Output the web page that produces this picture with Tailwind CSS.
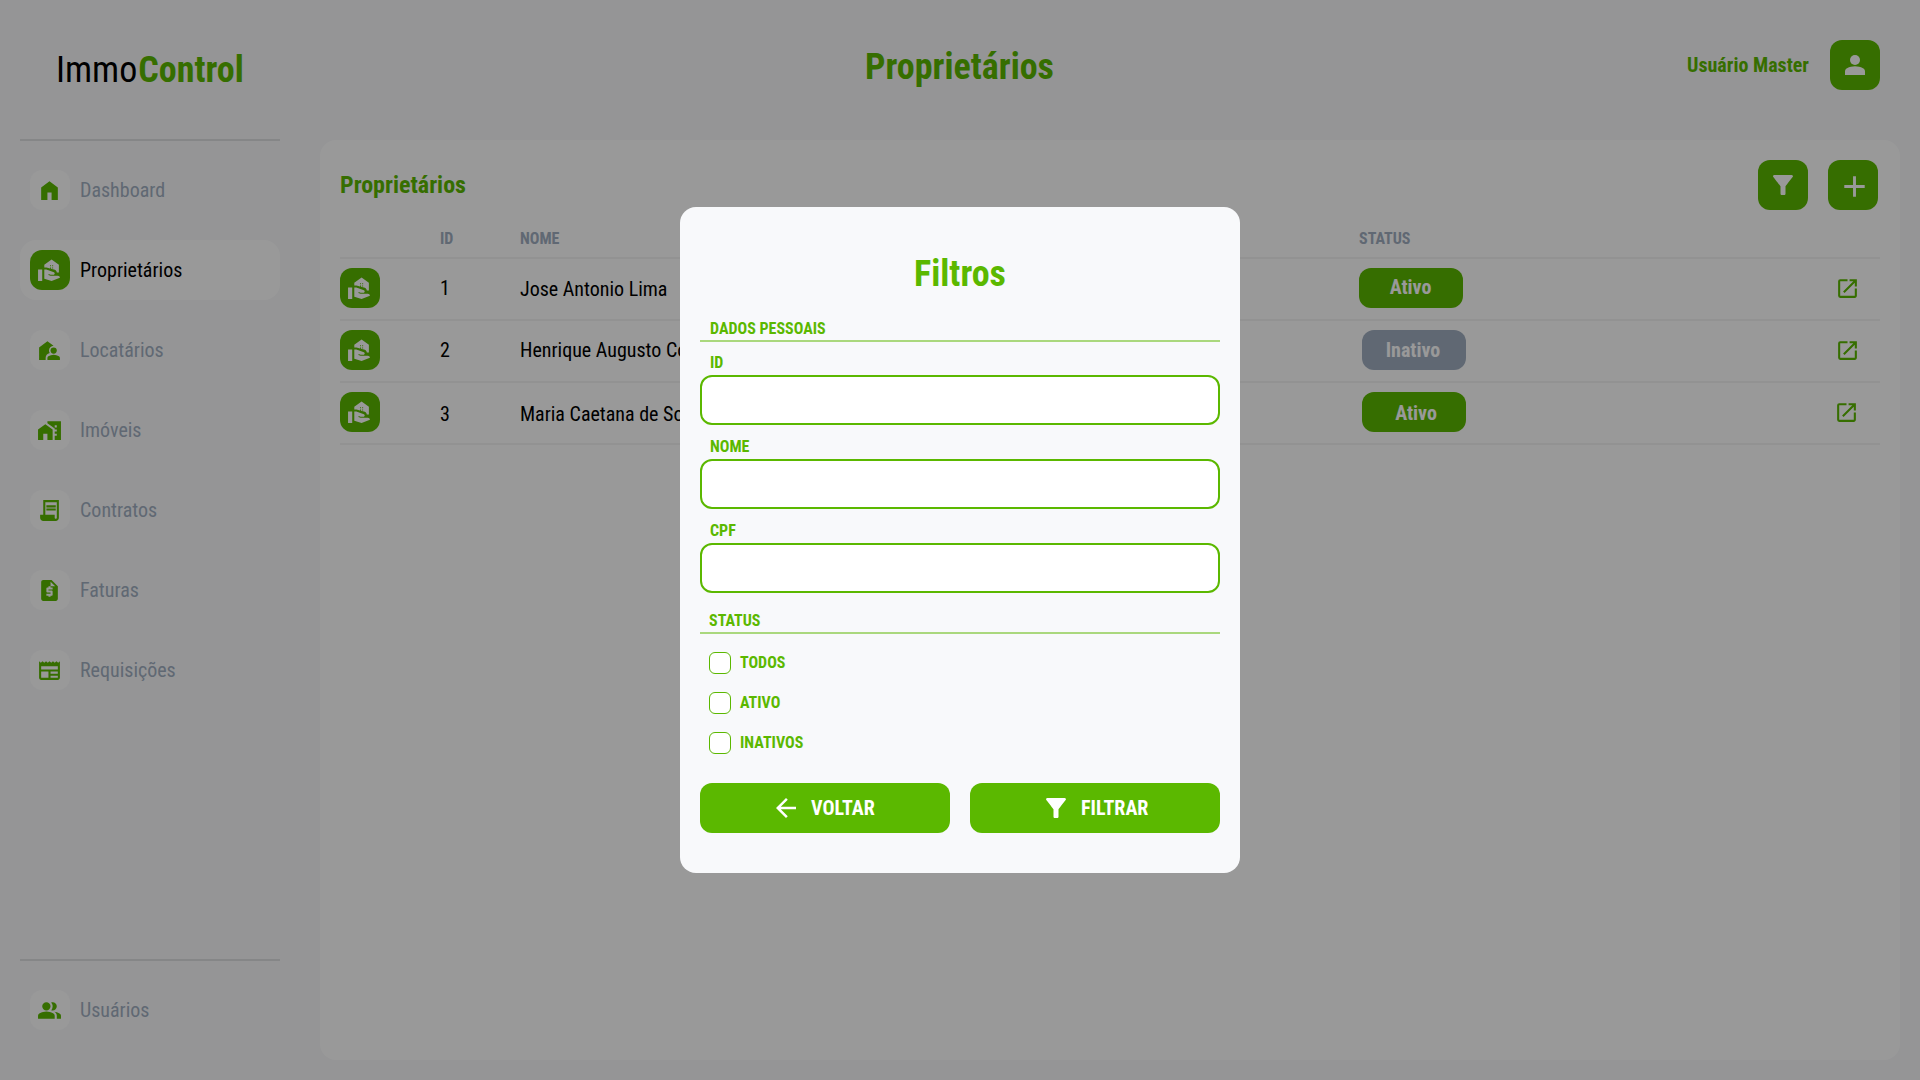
<!DOCTYPE html>
<html lang="pt-BR">
<head>
<meta charset="utf-8">
<title>ImmoControl - Proprietários</title>
<script src="https://cdn.jsdelivr.net/npm/@tailwindcss/browser@4"></script>
</head>
<body class="h-[1080px] w-[1920px] overflow-hidden bg-[#f8f9fb] font-['Roboto_Condensed','Roboto',sans-serif] text-xl text-black [font-stretch:75%]">
<svg class="hidden">
  <symbol id="home" viewBox="0 0 24 24"><path d="M4 21V9l8-6 8 6v12h-6v-7h-4v7z"/></symbol>
  <symbol id="agent" viewBox="0 0 24 24"><path d="M1 11h4v11H1zM20 17h-7l-2.09-.73.33-.94L13 16h2.82c.65 0 1.18-.53 1.18-1.18 0-.49-.31-.93-.77-1.11L8.97 11H7v9.02L14 22l8.01-3C22 17.9 21.11 17 20 17z"/><path fill-rule="evenodd" d="M14 1.5l-7 5V9h2l8.14 2.26c1.15.51 1.86 1.66 1.86 2.74h2V6.5l-7-5zM13.5 10h-1V9h1v1zm0-2h-1V7h1v1zm2 2h-1V9h1v1zm0-2h-1V7h1v1z"/></symbol>
  <symbol id="tenant" viewBox="0 0 24 24"><path d="M2 21V9l8-6 5.900 4.400A4.500 4.500 0 0 0 11.500 12q0 1.400.8 2.500Q8.300 15.800 8.300 19v2z"/><circle cx="16" cy="12" r="3"/><path d="M10 21v-1.900q0-1 .9-1.500Q13.300 16 16 16t5.100 1.600q.9.5.9 1.500V21z"/></symbol>
  <symbol id="building" viewBox="0 0 24 24"><path d="M1 11v10h5v-6h4v6h5V11L8 6z"/><path d="M10 3v1.970l7 5V11h2v2h-2v2h2v2h-2v4h6V3H10zm9 6h-2V7h2v2z"/></symbol>
  <symbol id="contract" viewBox="0 0 24 24"><path d="M6 22q-1.250 0-2.125-.875T3 19v-3h3V2h15v17q0 1.250-.875 2.125T18 22zm12-2q.425 0 .713-.288T19 19V4H8v12h9v3q0 .425.288.713T18 20M9 9V7h9v2zm0 3v-2h9v2z"/></symbol>
  <symbol id="quote" viewBox="0 0 24 24"><path d="M14 2H6c-1.100 0-1.990.9-1.990 2L4 20c0 1.100.89 2 1.990 2H18c1.100 0 2-.9 2-2V8l-6-6zm1 9h-4v1h3c.55 0 1 .45 1 1v3c0 .55-.45 1-1 1h-1v1h-2v-1H9v-2h4v-1h-3c-.55 0-1-.45-1-1v-3c0-.55.45-1 1-1h1V8h2v1h2v2zm-2-3V3.500L17.500 8H13z"/></symbol>
  <symbol id="news" viewBox="0 0 24 24"><path d="M22 3l-1.670 1.670L18.670 3 17 4.670 15.330 3l-1.660 1.670L12 3l-1.670 1.670L8.670 3 7 4.670 5.330 3 3.670 4.670 2 3v16c0 1.100.9 2 2 2h16c1.100 0 2-.9 2-2V3zM11 19H4v-6h7v6zm9 0h-7v-2h7v2zm0-4h-7v-2h7v2zm0-4H4V8h16v3z"/></symbol>
  <symbol id="group" viewBox="0 0 24 24"><path d="M1 20v-2.800q0-.85.438-1.562T2.600 14.550q1.550-.775 3.150-1.162T9 13t3.250.388 3.150 1.162q.725.375 1.163 1.088T17 17.200V20zm18 0v-3q0-1.100-.612-2.113T16.650 13.150q1.275.15 2.400.513t2.100.887q.9.5 1.375 1.112T23 17v3zM9 12q-1.650 0-2.825-1.175T5 8t1.175-2.825T9 4t2.825 1.175T13 8t-1.175 2.825T9 12m10-4q0 1.650-1.175 2.825T15 12q-.275 0-.7-.062t-.7-.138q.675-.8 1.038-1.775T15 8t-.362-2.025T13.600 4.200q.35-.125.7-.163T15 4q1.650 0 2.825 1.175T19 8"/></symbol>
  <symbol id="person" viewBox="0 0 24 24"><circle cx="12" cy="8" r="4"/><path d="M4 20v-2.800q0-.85.438-1.562T5.600 14.550q1.550-.775 3.150-1.162T12 13t3.250.388 3.150 1.162q.725.375 1.163 1.088T20 17.200V20z"/></symbol>
  <symbol id="filter" viewBox="0 0 24 24"><path d="M4.250 5.610C6.270 8.200 10 13 10 13v6c0 .55.45 1 1 1h2c.55 0 1-.45 1-1v-6s3.720-4.800 5.740-7.390A.998.998 0 0 0 18.950 4H5.040c-.83 0-1.300.95-.79 1.610z"/></symbol>
  <symbol id="plus" viewBox="0 0 24 24"><path d="M19 13h-6v6h-2v-6H5v-2h6V5h2v6h6z"/></symbol>
  <symbol id="back" viewBox="0 0 24 24"><path d="M20 11H7.830l5.590-5.590L12 4l-8 8 8 8 1.410-1.410L7.830 13H20z"/></symbol>
  <symbol id="open" viewBox="0 0 24 24"><path d="M19 19H5V5h7V3H5a2 2 0 0 0-2 2v14a2 2 0 0 0 2 2h14c1.100 0 2-.9 2-2v-7h-2v7zM14 3v2h3.590l-9.830 9.830 1.410 1.410L19 6.410V10h2V3h-7z"/></symbol>
</svg>

<div class="flex h-full flex-col">
  <header class="grid h-[140px] shrink-0 grid-cols-3">
    <div class="pt-[47px] pl-[56px] text-4xl leading-[46px]">Immo<span class="ml-px font-bold text-[#5bb800]">Control</span></div>
    <h1 class="pt-11 pr-px text-center text-4xl leading-[46px] font-bold text-[#5bb800]">Proprietários</h1>
    <div class="flex items-start justify-end gap-[21px] pt-10 pr-10">
      <span class="leading-[50px] font-bold text-[#5bb800]">Usuário Master</span>
      <button class="flex size-[50px] items-center justify-center rounded-xl bg-[#5bb800] text-white"><svg class="size-[30px] fill-current"><use href="#person"/></svg></button>
    </div>
  </header>

  <div class="flex min-h-0 flex-1">
    <aside class="flex w-[320px] shrink-0 flex-col pr-10 pb-10 pl-5">
      <hr class="-mt-px h-[2px] border-0 bg-[#dedfe1]">
      <nav class="mt-[19px] flex flex-col gap-5 text-[#a0aec0]">
        <a class="flex h-[60px] items-center gap-2.5 rounded-2xl px-2.5"><span class="flex size-10 items-center rounded-xl bg-white pl-[7px] text-[#5bb800]"><svg class="size-[25px] fill-current"><use href="#home"/></svg></span>Dashboard</a>
        <a class="flex h-[60px] items-center gap-2.5 rounded-2xl bg-white px-2.5 text-black"><span class="flex size-10 items-center rounded-xl bg-[#5bb800] pl-[7px] text-white"><svg class="size-[25px] fill-current"><use href="#agent"/></svg></span>Proprietários</a>
        <a class="flex h-[60px] items-center gap-2.5 rounded-2xl px-2.5"><span class="flex size-10 items-center rounded-xl bg-white pl-[7px] text-[#5bb800]"><svg class="size-[25px] fill-current"><use href="#tenant"/></svg></span>Locatários</a>
        <a class="flex h-[60px] items-center gap-2.5 rounded-2xl px-2.5"><span class="flex size-10 items-center rounded-xl bg-white pl-[7px] text-[#5bb800]"><svg class="size-[25px] fill-current"><use href="#building"/></svg></span>Imóveis</a>
        <a class="flex h-[60px] items-center gap-2.5 rounded-2xl px-2.5"><span class="flex size-10 items-center rounded-xl bg-white pl-[7px] text-[#5bb800]"><svg class="size-[25px] fill-current"><use href="#contract"/></svg></span>Contratos</a>
        <a class="flex h-[60px] items-center gap-2.5 rounded-2xl px-2.5"><span class="flex size-10 items-center rounded-xl bg-white pl-[7px] text-[#5bb800]"><svg class="size-[25px] fill-current"><use href="#quote"/></svg></span>Faturas</a>
        <a class="flex h-[60px] items-center gap-2.5 rounded-2xl px-2.5"><span class="flex size-10 items-center rounded-xl bg-white pl-[7px] text-[#5bb800]"><svg class="size-[25px] fill-current"><use href="#news"/></svg></span>Requisições</a>
      </nav>
      <hr class="mt-auto h-[2px] border-0 bg-[#dedfe1]">
      <a class="mt-[19px] flex h-[60px] items-center gap-2.5 px-2.5 text-[#a0aec0]"><span class="flex size-10 items-center rounded-xl bg-white pl-[7px] text-[#5bb800]"><svg class="size-[25px] fill-current"><use href="#group"/></svg></span>Usuários</a>
    </aside>

    <main class="mr-5 mb-5 flex-1 rounded-2xl bg-white px-5 pt-5">
      <div class="flex h-[50px] justify-between pr-0.5">
        <h2 class="text-2xl leading-[51px] font-bold text-[#5bb800]">Proprietários</h2>
        <div class="flex gap-5">
          <button class="flex size-[50px] items-center justify-center rounded-xl bg-[#5bb800] text-white"><svg class="size-[30px] fill-current"><use href="#filter"/></svg></button>
          <button class="flex size-[50px] items-center justify-center rounded-xl bg-[#5bb800] text-white"><svg class="mt-0.5 ml-0.5 size-[35px] fill-current"><use href="#plus"/></svg></button>
        </div>
      </div>
      <div class="grid h-[49px] grid-cols-[100px_80px_839px_1fr] border-b-2 border-[#f3f3f4] pt-4 text-base leading-[25px] font-bold text-[#a0aec0]">
        <span class="col-start-2">ID</span><span>NOME</span><span>STATUS</span>
      </div>
      <div class="grid h-[62px] grid-cols-[100px_80px_839px_1fr_45px] items-start border-b-2 border-[#f3f3f4] pt-[9px]">
        <span class="flex size-10 items-center rounded-xl bg-[#5bb800] pl-[7px] text-white"><svg class="size-[25px] fill-current"><use href="#agent"/></svg></span>
        <span class="leading-10">1</span><span class="pt-px leading-10">Jose Antonio Lima</span>
        <span class="h-10 w-[104px] rounded-xl bg-[#5bb800] pr-px text-center leading-[38px] font-bold text-white">Ativo</span>
        <svg class="mt-[8px] size-[25px] fill-[#5bb800]"><use href="#open"/></svg>
      </div>
      <div class="grid h-[62px] grid-cols-[100px_80px_842px_1fr_45px] items-start border-b-2 border-[#f3f3f4] pt-[9px]">
        <span class="flex size-10 items-center rounded-xl bg-[#5bb800] pl-[7px] text-white"><svg class="size-[25px] fill-current"><use href="#agent"/></svg></span>
        <span class="leading-10">2</span><span class="leading-10">Henrique Augusto Costa</span>
        <span class="h-10 w-[104px] rounded-xl bg-[#a0aec0] pr-0.5 text-center leading-10 font-bold text-white">Inativo</span>
        <svg class="mt-[8px] size-[25px] fill-[#5bb800]"><use href="#open"/></svg>
      </div>
      <div class="grid h-[62px] grid-cols-[100px_80px_842px_1fr_46px] items-start border-b-2 border-[#f3f3f4] pt-[9px]">
        <span class="flex size-10 items-center rounded-xl bg-[#5bb800] pl-[7px] text-white"><svg class="size-[25px] fill-current"><use href="#agent"/></svg></span>
        <span class="pt-0.5 leading-10">3</span><span class="pt-0.5 leading-10">Maria Caetana de Souza</span>
        <span class="h-10 w-[104px] rounded-xl bg-[#5bb800] pl-1 text-center leading-[42px] font-bold text-white">Ativo</span>
        <svg class="mt-[8px] size-[25px] fill-[#5bb800]"><use href="#open"/></svg>
      </div>
    </main>
  </div>
</div>

<div class="fixed inset-0 flex items-center justify-center bg-black/40">
  <section class="flex h-[666px] w-[560px] flex-col rounded-2xl bg-[#f8f9fb] px-5 pt-[44px] text-base font-bold text-[#5bb800]">
    <h2 class="text-center text-4xl leading-[46px]">Filtros</h2>
    <h3 class="mt-[21px] h-[24px] border-b-2 border-[#5bb800]/50 pl-2.5 leading-[22px]">DADOS PESSOAIS</h3>
    <label class="mt-2.5 flex flex-col"><span class="h-[23px] pl-2.5 leading-[22px]">ID</span><input class="h-[50px] rounded-xl border-2 border-[#5bb800] bg-white"></label>
    <label class="mt-[11px] flex flex-col"><span class="h-[23px] pl-2.5 leading-[22px]">NOME</span><input class="h-[50px] rounded-xl border-2 border-[#5bb800] bg-white"></label>
    <label class="mt-[11px] flex flex-col"><span class="h-[23px] pl-2.5 leading-[22px]">CPF</span><input class="h-[50px] rounded-xl border-2 border-[#5bb800] bg-white"></label>
    <h3 class="mt-[17px] h-[24px] border-b-2 border-[#5bb800]/50 pl-[9px] leading-[22px]">STATUS</h3>
    <div class="mt-[18px] flex flex-col gap-[18px] pl-[9px] leading-[22px]">
      <label class="flex h-[22px] items-center gap-[9px]"><span class="size-[22px] rounded-md border border-[#5bb800] bg-white"></span>TODOS</label>
      <label class="flex h-[22px] items-center gap-[9px]"><span class="size-[22px] rounded-md border border-[#5bb800] bg-white"></span>ATIVO</label>
      <label class="flex h-[22px] items-center gap-[9px]"><span class="size-[22px] rounded-md border border-[#5bb800] bg-white"></span>INATIVOS</label>
    </div>
    <div class="mt-[29px] flex gap-5 text-xl text-white">
      <button class="flex h-[50px] flex-1 items-center gap-2.5 rounded-xl bg-[#5bb800] pl-[71px]"><svg class="size-[30px] fill-current"><use href="#back"/></svg>VOLTAR</button>
      <button class="flex h-[50px] flex-1 items-center gap-2.5 rounded-xl bg-[#5bb800] pl-[71px]"><svg class="size-[30px] fill-current"><use href="#filter"/></svg>FILTRAR</button>
    </div>
  </section>
</div>
</body>
</html>
